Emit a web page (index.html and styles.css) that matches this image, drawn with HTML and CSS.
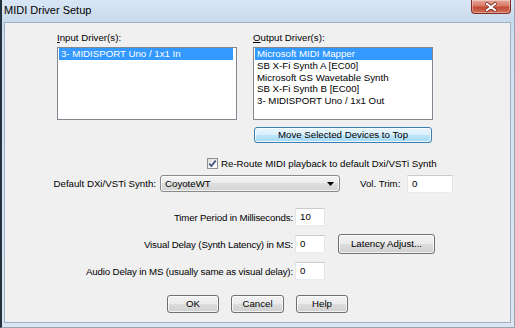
FILE: index.html
```html
<!DOCTYPE html>
<html>
<head>
<meta charset="utf-8">
<title>MIDI Driver Setup</title>
<link rel="stylesheet" href="styles.css">
</head>
<body>
<div class="window">
  <div class="titlebar">
    <span class="title">MIDI Driver Setup</span>
    <div class="close">
      <svg width="40" height="14" viewBox="0 0 40 14">
        <path d="M15.5 3.5 L24.5 10.5 M24.5 3.5 L15.5 10.5" stroke="#7a2a22" stroke-width="3.6" stroke-linecap="round"/>
        <path d="M15.5 3.5 L24.5 10.5 M24.5 3.5 L15.5 10.5" stroke="#ffffff" stroke-width="2" stroke-linecap="round"/>
      </svg>
    </div>
  </div>
  <div class="client">
    <div class="drivers">
      <div class="driver-col">
        <div class="field-label"><u>I</u>nput Driver(s):</div>
        <div class="listbox listbox-input">
          <div class="item selected">3- MIDISPORT Uno / 1x1 In</div>
        </div>
      </div>
      <div class="driver-col">
        <div class="field-label"><u>O</u>utput Driver(s):</div>
        <div class="listbox">
          <div class="item selected">Microsoft MIDI Mapper</div>
          <div class="item">SB X-Fi Synth A [EC00]</div>
          <div class="item">Microsoft GS Wavetable Synth</div>
          <div class="item">SB X-Fi Synth B [EC00]</div>
          <div class="item">3- MIDISPORT Uno / 1x1 Out</div>
        </div>
        <button class="btn btn-default move-btn">Move Selected Devices to Top</button>
      </div>
    </div>

    <div class="reroute">
      <span class="checkbox">
        <svg width="9" height="9" viewBox="0 0 9 9">
          <path d="M1.3 4.6 L3.4 7 L7.7 1.6" fill="none" stroke="#3b4f7a" stroke-width="1.7"/>
        </svg>
      </span>
      <span>Re-Route MIDI playback to default Dxi/VSTi Synth</span>
    </div>

    <div class="synth-row">
      <span class="synth-label">Default DXi/VSTi Synth:</span>
      <div class="combo">
        <span>CoyoteWT</span>
        <svg width="7" height="4" viewBox="0 0 7 4"><polygon points="0,0 7,0 3.5,4" fill="#000"/></svg>
      </div>
      <span class="vol-label">Vol. Trim:</span>
      <div class="textbox vol-box">0</div>
    </div>

    <div class="timing">
      <span class="t-label">Timer Period in Milliseconds:</span>
      <div class="textbox small-box">10</div>
      <span></span>

      <span class="t-label">Visual Delay (Synth Latency) in MS:</span>
      <div class="textbox small-box">0</div>
      <button class="btn latency-btn">Latency Adjust...</button>

      <span class="t-label">Audio Delay in MS (usually same as visual delay):</span>
      <div class="textbox small-box">0</div>
      <span></span>
    </div>

    <div class="actions">
      <button class="btn action-btn">OK</button>
      <button class="btn action-btn cancel">Cancel</button>
      <button class="btn action-btn">Help</button>
    </div>
  </div>
</div>
</body>
</html>
```

FILE: styles.css
```css
* { box-sizing: border-box; }

html, body {
  margin: 0;
  padding: 0;
  background: #cfdcea;
}

.window {
  width: 515px;
  height: 328px;
  display: flex;
  flex-direction: column;
  background: linear-gradient(180deg, #d9e6f4 0px, #c8d9ec 22px, #d2e0ef 40px, #dbe6f2 100%);
  border-left: 2px solid #24303d;
  border-right: 1px solid #98a5b4;
  border-bottom: 1px solid #98a5b4;
  padding: 0 3px 4px 2px;
  font-family: "Liberation Sans", Arial, sans-serif;
  font-size: 9.7px;
  color: #000;
}

.titlebar {
  height: 22px;
  flex: none;
  display: flex;
  justify-content: space-between;
  align-items: flex-start;
}

.title {
  font-size: 11px;
  line-height: 13px;
  padding-top: 4px;
  color: #000;
}

.close {
  width: 40px;
  height: 14px;
  border: 1px solid #7d2f27;
  border-top: none;
  border-radius: 0 0 4px 4px;
  background: linear-gradient(180deg, #e6a89c 0%, #d77966 45%, #c44a35 55%, #d0705a 100%);
  box-shadow: inset 0 0 0 1px rgba(255, 255, 255, 0.35);
  display: flex;
}

.client {
  flex: 1;
  background: #f0f0f0;
  border: 1px solid #9db0c5;
}

/* driver lists */
.drivers {
  display: flex;
  gap: 16px;
  padding: 9px 0 0 52px;
}

.driver-col {
  width: 180px;
  display: flex;
  flex-direction: column;
}

.field-label {
  height: 12px;
  line-height: 12px;
}

.listbox {
  margin-top: 3px;
  height: 73px;
  border: 1px solid #828790;
  background: #fff;
  padding: 0 0 0 1px;
}

.listbox-input {
  padding-right: 3px;
}

.item {
  height: 11.75px;
  line-height: 11.75px;
  padding-left: 2px;
  white-space: nowrap;
}

.item.selected {
  background: #3399ff;
  color: #fff;
}

/* buttons */
.btn {
  font: inherit;
  color: #000;
  padding: 0;
  border: 1px solid #707070;
  border-radius: 3px;
  background: linear-gradient(180deg, #f2f2f2 0%, #ebebeb 50%, #dddddd 50%, #cfcfcf 100%);
  box-shadow: inset 0 0 0 1px rgba(255, 255, 255, 0.75);
  line-height: 12px;
  text-align: center;
}

.btn-default {
  border-color: #3c7fb1;
  background: linear-gradient(180deg, #eaf6fd 0%, #d9f0fc 50%, #bee6fd 50%, #a7d9f5 100%);
}

.move-btn {
  margin: 7px 0 0 1px;
  width: 178px;
  height: 16px;
}

/* re-route checkbox */
.reroute {
  display: flex;
  align-items: center;
  gap: 3px;
  height: 12px;
  margin-top: 14px;
  padding-left: 202px;
}

.checkbox {
  width: 11px;
  height: 11px;
  border: 1px solid #8e8f8f;
  background: linear-gradient(135deg, #dcdcdc 0%, #f4f4f4 60%, #ffffff 100%);
  display: flex;
  align-items: center;
  justify-content: center;
}

/* synth row */
.synth-row {
  display: flex;
  align-items: center;
  height: 19px;
  margin-top: 5px;
}

.synth-label {
  width: 151px;
  text-align: right;
  margin-right: 4px;
}

.combo {
  width: 180px;
  height: 17px;
  border: 1px solid #8a8a8a;
  border-radius: 3px;
  background: linear-gradient(180deg, #f4f4f4 0%, #ececec 50%, #dedede 50%, #d4d4d4 100%);
  box-shadow: inset 0 0 0 1px rgba(255, 255, 255, 0.7);
  display: flex;
  align-items: center;
  justify-content: space-between;
  padding: 0 5px 0 4px;
}

.vol-label {
  width: 42px;
  margin-left: 20px;
  margin-right: 5px;
}

.textbox {
  background: #fff;
  border: 1px solid;
  border-color: #c9cbd0 #e3e6ea #e8ebef #e3e6ea;
  height: 18px;
  line-height: 16px;
  padding-left: 4px;
}

.vol-box {
  width: 46px;
}

/* timing grid */
.timing {
  display: grid;
  grid-template-columns: 288px 30px 108px;
  grid-template-rows: 18px 20px 18px;
  column-gap: 2px;
  row-gap: 8px;
  align-items: center;
  margin-top: 15px;
}

.t-label {
  text-align: right;
  white-space: nowrap;
  letter-spacing: -0.15px;
}

.small-box {
  width: 30px;
}

.latency-btn {
  justify-self: end;
  width: 97px;
  height: 20px;
}

/* bottom buttons */
.actions {
  display: flex;
  justify-content: center;
  gap: 12px;
  margin-top: 15px;
}

.action-btn {
  width: 52px;
  height: 18px;
}

.action-btn.cancel {
  width: 53px;
}
```
